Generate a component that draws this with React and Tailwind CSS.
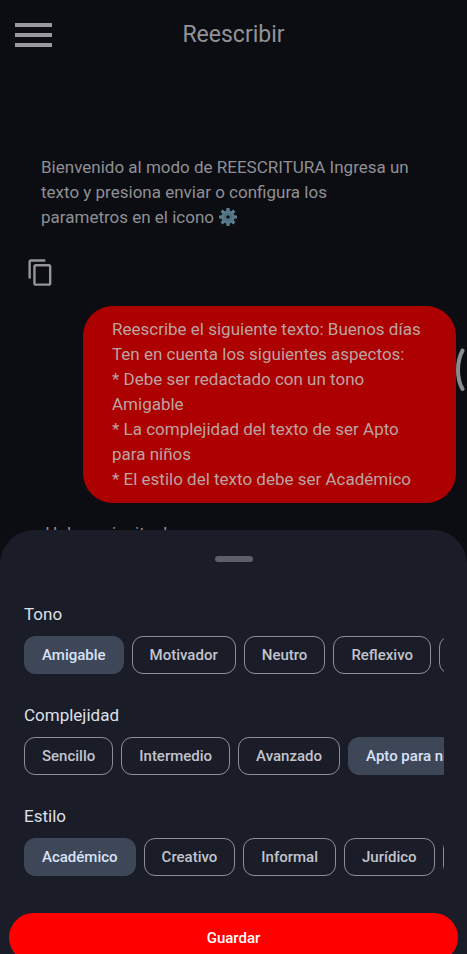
import { MdContentCopy } from "react-icons/md";

const groups = [
  { title: "Tono", options: ["Amigable", "Motivador", "Neutro", "Reflexivo", "Serio"], selected: "Amigable" },
  { title: "Complejidad", options: ["Sencillo", "Intermedio", "Avanzado", "Apto para niños"], selected: "Apto para niños" },
  { title: "Estilo", options: ["Académico", "Creativo", "Informal", "Jurídico", "Literario"], selected: "Académico" },
];

function Gear() {
  const teeth = [0, 45, 90, 135, 180, 225, 270, 315];
  return (
    <svg viewBox="0 0 20 20" className="inline-block size-5 align-[-4px]" role="img" aria-label="configuración">
      {teeth.map((a) => (
        <path key={a} d="M8.2 4 L8.5 1 H11.5 L11.8 4 Z" fill="#5b7f8d" transform={`rotate(${a} 10 10)`} />
      ))}
      <circle cx="10" cy="10" r="6.6" fill="#557988" />
      <circle cx="10" cy="10" r="3.6" fill="none" stroke="#45697a" strokeWidth="1" />
      <circle cx="10" cy="10" r="1.8" fill="#0b0d12" />
    </svg>
  );
}

function Chip({ label, selected }) {
  return (
    <button
      type="button"
      aria-pressed={selected}
      className={
        "h-[38px] shrink-0 rounded-[11px] border px-[17px] text-[15px] leading-5 font-medium whitespace-nowrap " +
        (selected ? "border-[#3e4758] bg-[#3e4758] text-[#d8e2f8]" : "border-[#8d8f98] text-[#c2c4cd]")
      }
    >
      {label}
    </button>
  );
}

export default function App() {
  return (
    <div className="relative h-screen overflow-hidden bg-[#0b0d12] font-[Roboto,sans-serif] text-[17px] leading-[25px] text-[#8f9094]">
      <header className="grid h-[70px] grid-cols-[1fr_auto_1fr] items-center px-[15px]">
        <button type="button" aria-label="Menú" className="w-[37px]">
          <svg viewBox="0 0 37 24" className="h-6 w-[37px]" fill="#9a98a1">
            <rect width="37" height="4" />
            <rect y="10" width="37" height="4" />
            <rect y="20" width="37" height="4" />
          </svg>
        </button>
        <h1 className="text-[23px] leading-7 text-[#929297]">Reescribir</h1>
      </header>

      <main className="flex flex-col pt-[85px]">
        <p className="pr-14 pl-[41px]">
          Bienvenido al modo de REESCRITURA Ingresa un texto y presiona enviar o configura los parametros en el icono <Gear />
        </p>
        <button type="button" aria-label="Copiar" className="mt-7 ml-[26px] self-start text-[#94949a]">
          <MdContentCopy size={29} />
        </button>
        <div className="mt-[19px] mr-[11px] ml-[83px] rounded-[30px] bg-[#ad0000] px-[29px] py-[11px] text-[#bba3a3]">
          <p>Reescribe el siguiente texto: Buenos días</p>
          <p>Ten en cuenta los siguientes aspectos:</p>
          <p>* Debe ser redactado con un tono Amigable</p>
          <p>* La complejidad del texto de ser Apto para niños</p>
          <p>* El estilo del texto debe ser Académico</p>
        </div>
        <p className="mt-[18px] pr-14 pl-[41px]">¡Hola, amiguitos!</p>
      </main>

      <svg viewBox="0 0 10 44" className="absolute top-[348px] right-[2px] h-11 w-[10px]" fill="none" stroke="#8c8c8c" strokeWidth="4" strokeLinecap="round">
        <path d="M7.5 2.5 C1.5 14 1.5 30 7.5 41" />
      </svg>

      <section className="absolute inset-x-0 -bottom-2 flex flex-col rounded-t-[34px] bg-[#1a1c27] pt-[26px]" aria-label="Parámetros">
        <div className="h-[6px] w-[38px] self-center rounded-full bg-[#5e5f6b]" />
        <div className="flex flex-col gap-[29px] pt-10 pr-[23px] pl-6">
          {groups.map((g) => (
            <div key={g.title} role="group" aria-label={g.title}>
              <h2 className="text-[17px] leading-6 text-[#dfe0e8]">{g.title}</h2>
              <div className="mt-[10px] flex gap-2 overflow-hidden">
                {g.options.map((o) => (
                  <Chip key={o} label={o} selected={o === g.selected} />
                ))}
              </div>
            </div>
          ))}
        </div>
        <button type="button" className="mx-[9px] mt-[37px] h-[49px] rounded-full bg-[#ff0000] text-[15px] leading-5 font-medium text-white">
          Guardar
        </button>
      </section>
    </div>
  );
}
